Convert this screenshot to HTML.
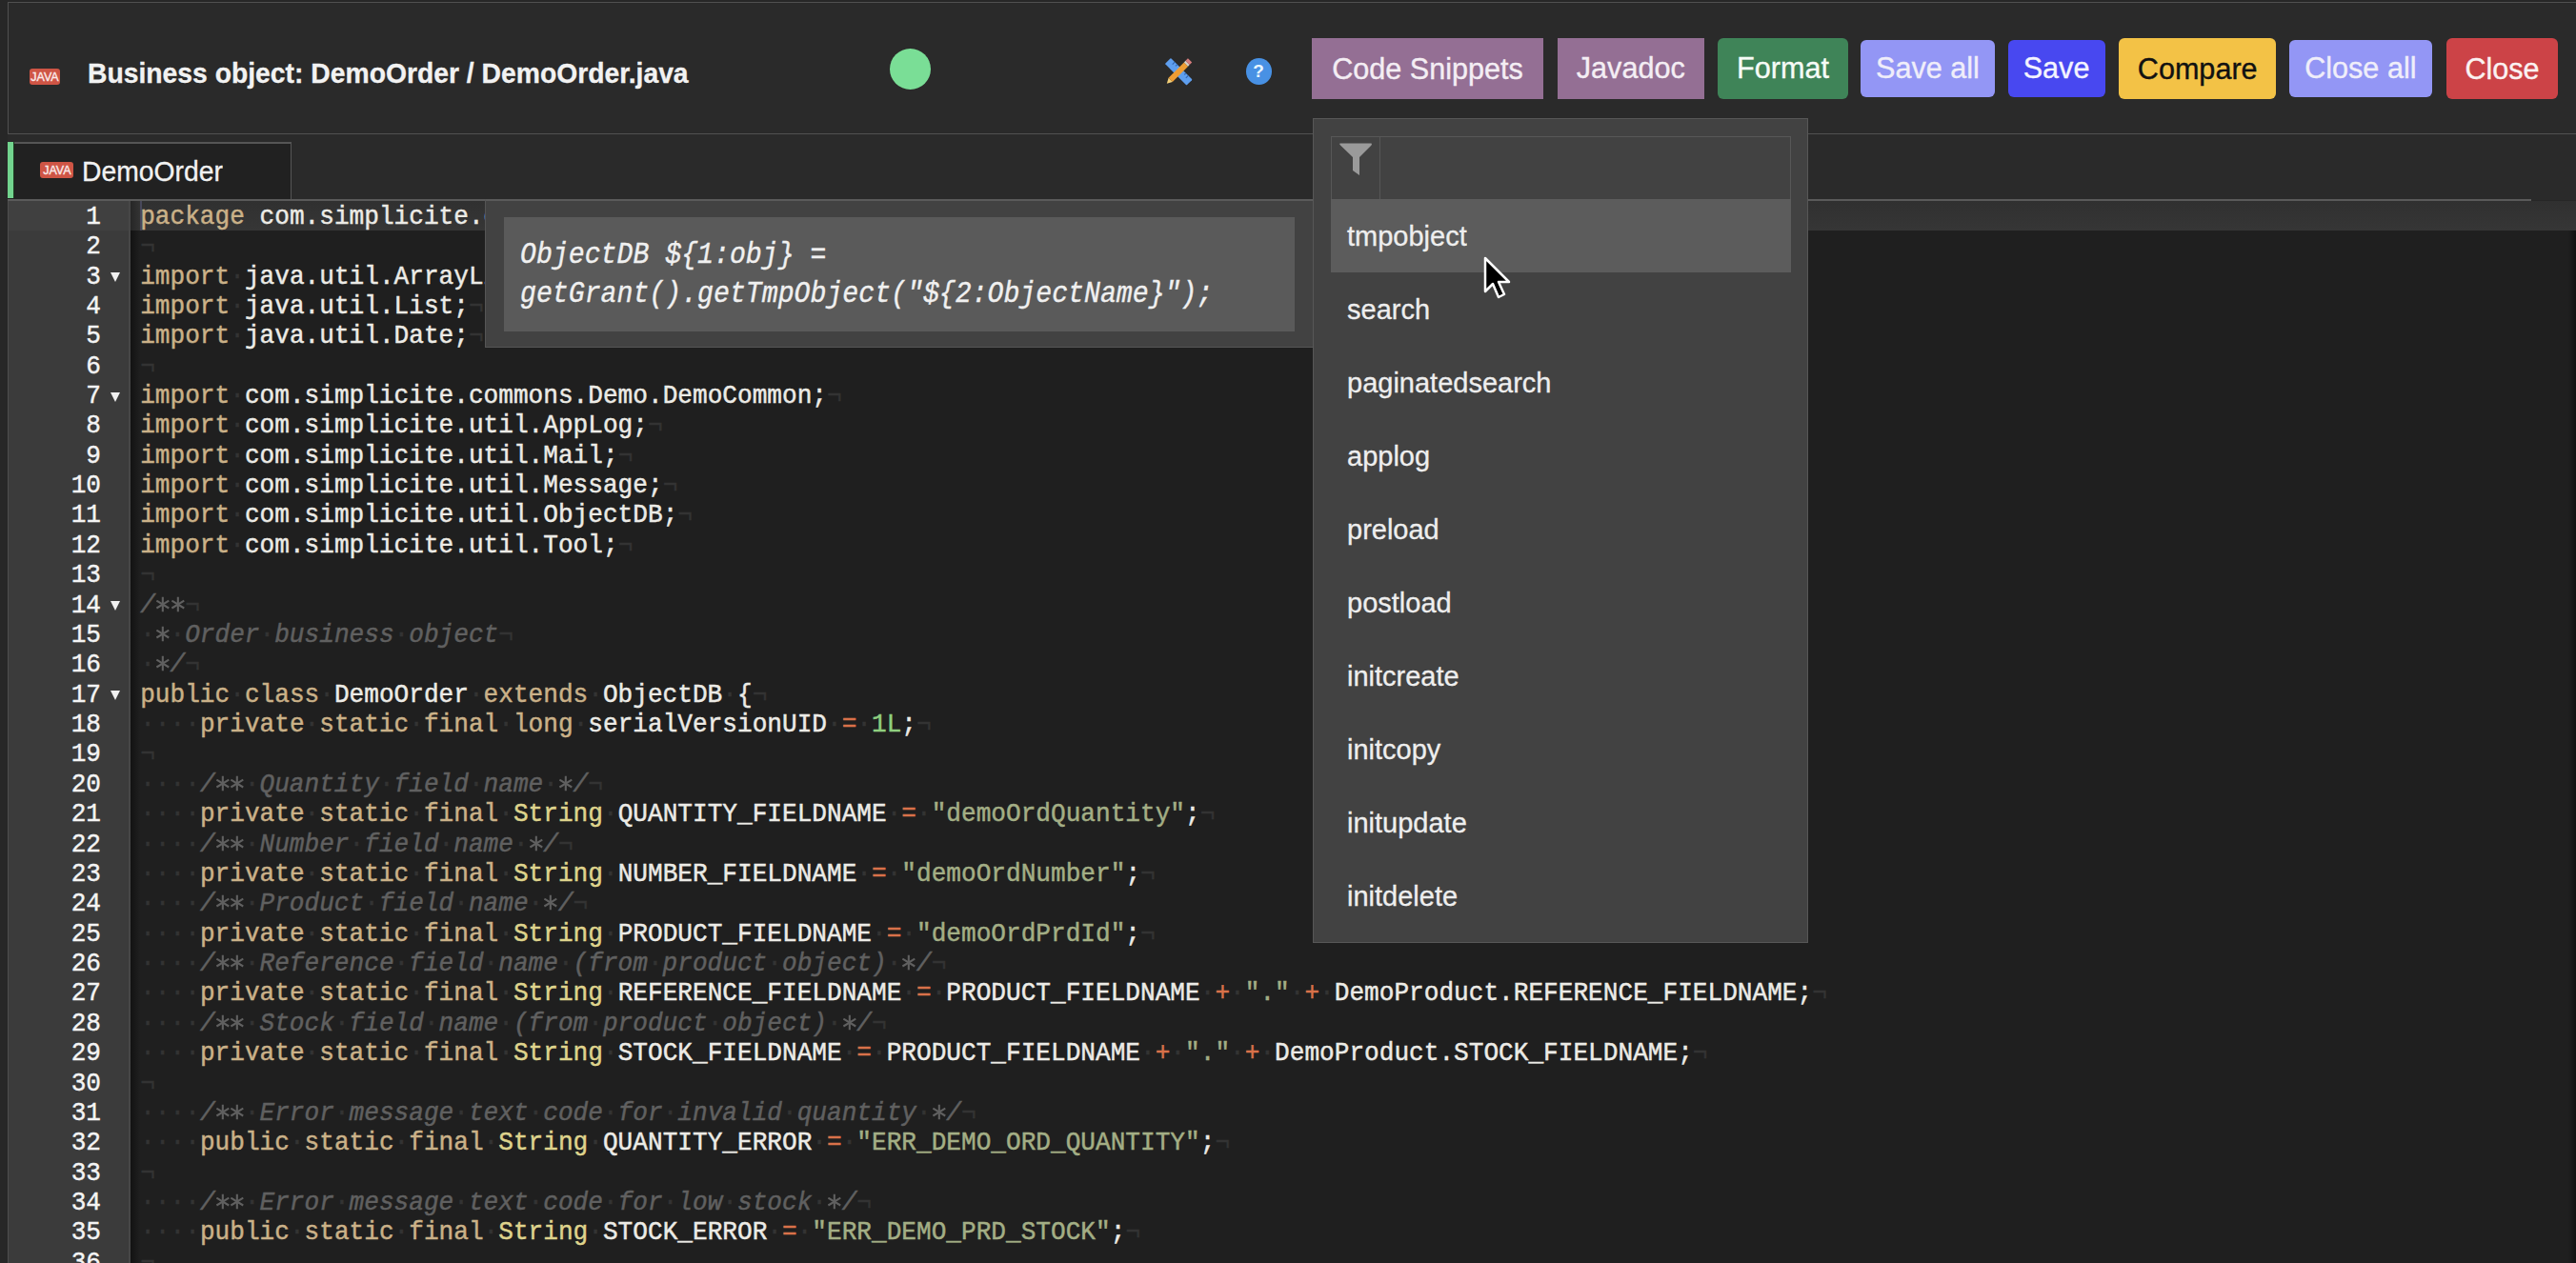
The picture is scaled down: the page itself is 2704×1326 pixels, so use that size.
<!DOCTYPE html><html><head><meta charset="utf-8"><style>
*{margin:0;padding:0;box-sizing:border-box}
html,body{width:2704px;height:1326px;overflow:hidden;background:#272727;font-family:"Liberation Sans",sans-serif}
.abs{position:absolute}
#hdr{position:absolute;left:7.5px;top:2.2px;width:2720px;height:139px;background:#2a2a2a;border:1.6px solid #505050}
.badge{position:absolute;background:#cf5545;color:#fbeaea;font:12.5px/18.5px "Liberation Sans",sans-serif;-webkit-text-stroke:0.35px;text-align:center;border-radius:3px;letter-spacing:0}
#title{position:absolute;left:92px;top:55px;font-weight:bold;font-size:28.3px;line-height:44px;color:#f2f2f2;white-space:nowrap;-webkit-text-stroke:0.3px;transform:scaleY(1.03);transform-origin:0 31.8px}
#dot{position:absolute;left:933.8px;top:50.7px;width:43.5px;height:43.5px;border-radius:50%;background:#7ade96}
#help{position:absolute;left:1307.5px;top:61.3px;width:27px;height:27.5px;border-radius:50%;background:#4891e4;color:#e8f6ff;font:bold 19px/28px "Liberation Sans",sans-serif;text-align:center}
.btn{position:absolute;text-align:center;font-size:30.6px;white-space:nowrap;-webkit-text-stroke:0.35px}.btn span{display:inline-block;transform:scaleY(1.04)}
#tabbar{position:absolute;left:8px;top:141px;width:2696px;height:69px;background:#2a2a2a}
#tab{position:absolute;left:8px;top:149px;width:298px;height:60px;background:#212121;border-top:2px solid #555;border-right:1.5px solid #555}
#tabg{position:absolute;left:7.6px;top:148.5px;width:7.6px;height:59px;background:#72d48e;border-right:1.5px solid #1d3a1f}
#tabt{position:absolute;left:86px;top:151.3px;font-size:28.3px;line-height:59px;color:#f2f2f2;-webkit-text-stroke:0.3px;transform:scaleY(1.04);transform-origin:0 39.3px}
#edtop{position:absolute;left:8px;top:209px;width:2649px;height:2px;background:#5a5a5a}
#editor{position:absolute;left:8px;top:211px;width:2696px;height:1116px;background:#1f1f1f}
#gutter{position:absolute;left:8px;top:211px;width:129px;height:1116px;background:#3b3b3b;border-left:1px solid #4e4e4e;border-right:2px solid #474747}
#shadow{position:absolute;left:137px;top:242px;width:10px;height:1116px;background:linear-gradient(to right,#121212,#1f1f1f)}
#actg{position:absolute;left:9px;top:211px;width:126px;height:31px;background:#404040}#shadow1{position:absolute;left:137px;top:211px;width:10px;height:31px;background:linear-gradient(to right,#262626,#333)}#rstrip{position:absolute;left:2696px;top:242px;width:8px;height:1084px;background:linear-gradient(to right,#1f1f1f,#111)}
#actc{position:absolute;left:137px;top:211px;width:2567px;height:31px;background:linear-gradient(#303030,#363636)}
.ln{position:absolute;left:147.2px;height:31.37px;line-height:31.37px;transform:scaleY(1.055);transform-origin:0 22.63px;font-family:"Liberation Mono",monospace;font-size:26.113px;white-space:pre;color:#ecebe6;-webkit-text-stroke:0.45px}
.gn{position:absolute;left:8px;width:98px;transform:scaleY(1.055);transform-origin:0 22.63px;text-align:right;height:31.37px;line-height:31.37px;font-family:"Liberation Mono",monospace;font-size:26.113px;color:#f4f4f4;-webkit-text-stroke:0.4px}
.fa{position:absolute;left:116px;width:0;height:0;border-left:5px solid transparent;border-right:5px solid transparent;border-top:10px solid #f0f0f0}
.ast{vertical-align:top}.k{color:#cab188}.t{color:#ded38c}.s{color:#a3ae85}.o{color:#d9714a}.n{color:#8fcf7f}.c{color:#606060;font-style:italic}.d{color:#ecebe6}.i{color:#333333}
#pop{position:absolute;left:509px;top:209px;width:870px;height:156px;background:#424242;border:1.5px solid #555;border-right:none;border-top:2px solid #5a5a5a}
#popin{position:absolute;left:528.7px;top:228px;width:830.5px;height:119.8px;background:#5a5a5a}
.pl{position:absolute;left:546px;font-family:"Liberation Mono",monospace;font-style:italic;font-size:28.2px;color:#f0f0f0;white-space:pre;line-height:41px;height:41px;transform:scaleY(1.12);transform-origin:0 28px;-webkit-text-stroke:0.35px}
#dd{position:absolute;left:1378px;top:124px;width:520px;height:866px;background:#424242;border:1px solid #575757}
#ig{position:absolute;left:18px;top:18px;width:483px;height:67px;border:1px solid #575757;border-bottom:none}
#addon{position:absolute;left:0;top:0;width:51px;height:66px;border-right:1px solid #575757}
.it{position:absolute;left:18px;width:483px;height:76.5px;padding-left:17px;font-size:29px;line-height:78px;color:#eeeeee;white-space:nowrap;-webkit-text-stroke:0.3px}.it span{display:inline-block;transform:scaleY(1.04)}
.it.act{background:#5c5c5c}
</style></head><body>
<div id="hdr"></div>
<div class="badge" style="left:30.7px;top:71.7px;width:32.5px;height:17px">JAVA</div>
<div id="title">Business object: DemoOrder / DemoOrder.java</div>
<div id="dot"></div>
<svg class="abs" style="left:1215px;top:55px" width="45" height="40" viewBox="0 0 45 40">
<g transform="translate(22.2,20.3) rotate(45)"><rect x="-16" y="-4.3" width="32" height="8.6" fill="#5e9eee" rx="0.8"/>
<g stroke="#2f64b0" stroke-width="1.1"><line x1="-10" y1="-4.3" x2="-10" y2="-0.8"/><line x1="-6.5" y1="-4.3" x2="-6.5" y2="-2"/><line x1="6.5" y1="-4.3" x2="6.5" y2="-2"/><line x1="10" y1="-4.3" x2="10" y2="-0.8"/></g></g>
<g transform="translate(22.2,20.3) rotate(-45)"><rect x="-12" y="-3" width="23" height="6" fill="#ee9c34"/><polygon points="-12,-3 -17.5,0 -12,3" fill="#f2cf78"/><rect x="11" y="-3" width="2.2" height="6" fill="#d8d0c8"/><rect x="13.2" y="-3" width="3.6" height="6" fill="#d77c7c"/></g>
</svg>
<div id="help">?</div>
<div class="btn" style="left:1377.0px;top:40.0px;width:243.0px;height:64.0px;background:#946f94;color:#f4eef4;border-radius:0px;line-height:64.0px"><span>Code Snippets</span></div><div class="btn" style="left:1634.6px;top:40.0px;width:154.4px;height:63.5px;background:#946f94;color:#f4eef4;border-radius:0px;line-height:63.5px"><span>Javadoc</span></div><div class="btn" style="left:1803.3px;top:40.0px;width:136.3px;height:63.5px;background:#3f8458;color:#f6fbf6;border-radius:6px;line-height:63.5px"><span>Format</span></div><div class="btn" style="left:1953.0px;top:42.0px;width:141.0px;height:59.5px;background:#9396f5;color:#f0eefa;border-radius:6px;line-height:59.5px"><span>Save all</span></div><div class="btn" style="left:2107.5px;top:42.0px;width:102.1px;height:59.5px;background:#4848f0;color:#f4f4ff;border-radius:6px;line-height:59.5px"><span>Save</span></div><div class="btn" style="left:2224.0px;top:39.6px;width:165.4px;height:64.4px;background:#f3c246;color:#111111;border-radius:6px;line-height:64.4px"><span>Compare</span></div><div class="btn" style="left:2402.5px;top:42.0px;width:150.7px;height:59.5px;background:#9396f5;color:#f0eefa;border-radius:6px;line-height:59.5px"><span>Close all</span></div><div class="btn" style="left:2568.0px;top:39.6px;width:117.0px;height:64.4px;background:#cc4347;color:#fbf2f2;border-radius:6px;line-height:64.4px"><span>Close</span></div>
<div id="tabbar"></div><div id="tab"></div><div id="tabg"></div>
<div class="badge" style="left:42.4px;top:169.7px;width:35px;height:17px;line-height:18px">JAVA</div>
<div id="tabt">DemoOrder</div>
<div id="edtop"></div>
<div id="editor"></div>
<div id="gutter"></div>
<div id="actc"></div><div id="actg"></div>
<div id="shadow"></div><div id="shadow1"></div><div style="position:absolute;left:146.8px;top:211px;width:2.6px;height:31px;background:#48485a"></div><div id="rstrip"></div>
<div class="gn" style="top:212.77px">1</div><div class="gn" style="top:244.14px">2</div><div class="gn" style="top:275.51px">3</div><div class="fa" style="top:286.21px"></div><div class="gn" style="top:306.88px">4</div><div class="gn" style="top:338.25px">5</div><div class="gn" style="top:369.62px">6</div><div class="gn" style="top:400.99px">7</div><div class="fa" style="top:411.69px"></div><div class="gn" style="top:432.36px">8</div><div class="gn" style="top:463.73px">9</div><div class="gn" style="top:495.10px">10</div><div class="gn" style="top:526.47px">11</div><div class="gn" style="top:557.84px">12</div><div class="gn" style="top:589.21px">13</div><div class="gn" style="top:620.58px">14</div><div class="fa" style="top:631.28px"></div><div class="gn" style="top:651.95px">15</div><div class="gn" style="top:683.32px">16</div><div class="gn" style="top:714.69px">17</div><div class="fa" style="top:725.39px"></div><div class="gn" style="top:746.06px">18</div><div class="gn" style="top:777.43px">19</div><div class="gn" style="top:808.80px">20</div><div class="gn" style="top:840.17px">21</div><div class="gn" style="top:871.54px">22</div><div class="gn" style="top:902.91px">23</div><div class="gn" style="top:934.28px">24</div><div class="gn" style="top:965.65px">25</div><div class="gn" style="top:997.02px">26</div><div class="gn" style="top:1028.39px">27</div><div class="gn" style="top:1059.76px">28</div><div class="gn" style="top:1091.13px">29</div><div class="gn" style="top:1122.50px">30</div><div class="gn" style="top:1153.87px">31</div><div class="gn" style="top:1185.24px">32</div><div class="gn" style="top:1216.61px">33</div><div class="gn" style="top:1247.98px">34</div><div class="gn" style="top:1279.35px">35</div><div class="gn" style="top:1310.72px">36</div>
<div class="ln" style="top:212.77px"><span class="k">package</span><span class="i">·</span><span class="d">com</span><span class="d">.</span><span class="d">simplicite</span><span class="d">.</span><span class="d">objects</span><span class="d">.</span><span class="d">Demo</span><span class="d">;</span><span class="i">¬</span></div><div class="ln" style="top:244.14px"><span class="i">¬</span></div><div class="ln" style="top:275.51px"><span class="k">import</span><span class="i">·</span><span class="d">java</span><span class="d">.</span><span class="d">util</span><span class="d">.</span><span class="d">ArrayList</span><span class="d">;</span><span class="i">¬</span></div><div class="ln" style="top:306.88px"><span class="k">import</span><span class="i">·</span><span class="d">java</span><span class="d">.</span><span class="d">util</span><span class="d">.</span><span class="d">List</span><span class="d">;</span><span class="i">¬</span></div><div class="ln" style="top:338.25px"><span class="k">import</span><span class="i">·</span><span class="d">java</span><span class="d">.</span><span class="d">util</span><span class="d">.</span><span class="d">Date</span><span class="d">;</span><span class="i">¬</span></div><div class="ln" style="top:369.62px"><span class="i">¬</span></div><div class="ln" style="top:400.99px"><span class="k">import</span><span class="i">·</span><span class="d">com</span><span class="d">.</span><span class="d">simplicite</span><span class="d">.</span><span class="d">commons</span><span class="d">.</span><span class="d">Demo</span><span class="d">.</span><span class="d">DemoCommon</span><span class="d">;</span><span class="i">¬</span></div><div class="ln" style="top:432.36px"><span class="k">import</span><span class="i">·</span><span class="d">com</span><span class="d">.</span><span class="d">simplicite</span><span class="d">.</span><span class="d">util</span><span class="d">.</span><span class="d">AppLog</span><span class="d">;</span><span class="i">¬</span></div><div class="ln" style="top:463.73px"><span class="k">import</span><span class="i">·</span><span class="d">com</span><span class="d">.</span><span class="d">simplicite</span><span class="d">.</span><span class="d">util</span><span class="d">.</span><span class="d">Mail</span><span class="d">;</span><span class="i">¬</span></div><div class="ln" style="top:495.10px"><span class="k">import</span><span class="i">·</span><span class="d">com</span><span class="d">.</span><span class="d">simplicite</span><span class="d">.</span><span class="d">util</span><span class="d">.</span><span class="d">Message</span><span class="d">;</span><span class="i">¬</span></div><div class="ln" style="top:526.47px"><span class="k">import</span><span class="i">·</span><span class="d">com</span><span class="d">.</span><span class="d">simplicite</span><span class="d">.</span><span class="d">util</span><span class="d">.</span><span class="d">ObjectDB</span><span class="d">;</span><span class="i">¬</span></div><div class="ln" style="top:557.84px"><span class="k">import</span><span class="i">·</span><span class="d">com</span><span class="d">.</span><span class="d">simplicite</span><span class="d">.</span><span class="d">util</span><span class="d">.</span><span class="d">Tool</span><span class="d">;</span><span class="i">¬</span></div><div class="ln" style="top:589.21px"><span class="i">¬</span></div><div class="ln" style="top:620.58px"><span class="c">/<svg class="ast" width="15.67" height="31.37" viewBox="0 0 15.67 31.37"><g stroke="#606060" stroke-width="2.1" stroke-linecap="butt"><line x1="7.83" y1="6.6" x2="7.83" y2="21.4"/><line x1="1.4" y1="10.3" x2="14.26" y2="17.7"/><line x1="1.4" y1="17.7" x2="14.26" y2="10.3"/></g></svg><svg class="ast" width="15.67" height="31.37" viewBox="0 0 15.67 31.37"><g stroke="#606060" stroke-width="2.1" stroke-linecap="butt"><line x1="7.83" y1="6.6" x2="7.83" y2="21.4"/><line x1="1.4" y1="10.3" x2="14.26" y2="17.7"/><line x1="1.4" y1="17.7" x2="14.26" y2="10.3"/></g></svg></span><span class="i">¬</span></div><div class="ln" style="top:651.95px"><span class="i">·</span><span class="c"><svg class="ast" width="15.67" height="31.37" viewBox="0 0 15.67 31.37"><g stroke="#606060" stroke-width="2.1" stroke-linecap="butt"><line x1="7.83" y1="6.6" x2="7.83" y2="21.4"/><line x1="1.4" y1="10.3" x2="14.26" y2="17.7"/><line x1="1.4" y1="17.7" x2="14.26" y2="10.3"/></g></svg></span><span class="i">·</span><span class="c">Order</span><span class="i">·</span><span class="c">business</span><span class="i">·</span><span class="c">object</span><span class="i">¬</span></div><div class="ln" style="top:683.32px"><span class="i">·</span><span class="c"><svg class="ast" width="15.67" height="31.37" viewBox="0 0 15.67 31.37"><g stroke="#606060" stroke-width="2.1" stroke-linecap="butt"><line x1="7.83" y1="6.6" x2="7.83" y2="21.4"/><line x1="1.4" y1="10.3" x2="14.26" y2="17.7"/><line x1="1.4" y1="17.7" x2="14.26" y2="10.3"/></g></svg>/</span><span class="i">¬</span></div><div class="ln" style="top:714.69px"><span class="k">public</span><span class="i">·</span><span class="k">class</span><span class="i">·</span><span class="d">DemoOrder</span><span class="i">·</span><span class="k">extends</span><span class="i">·</span><span class="d">ObjectDB</span><span class="i">·</span><span class="d">{</span><span class="i">¬</span></div><div class="ln" style="top:746.06px"><span class="i">····</span><span class="k">private</span><span class="i">·</span><span class="k">static</span><span class="i">·</span><span class="k">final</span><span class="i">·</span><span class="k">long</span><span class="i">·</span><span class="d">serialVersionUID</span><span class="i">·</span><span class="o">=</span><span class="i">·</span><span class="n">1L</span><span class="d">;</span><span class="i">¬</span></div><div class="ln" style="top:777.43px"><span class="i">¬</span></div><div class="ln" style="top:808.80px"><span class="i">····</span><span class="c">/<svg class="ast" width="15.67" height="31.37" viewBox="0 0 15.67 31.37"><g stroke="#606060" stroke-width="2.1" stroke-linecap="butt"><line x1="7.83" y1="6.6" x2="7.83" y2="21.4"/><line x1="1.4" y1="10.3" x2="14.26" y2="17.7"/><line x1="1.4" y1="17.7" x2="14.26" y2="10.3"/></g></svg><svg class="ast" width="15.67" height="31.37" viewBox="0 0 15.67 31.37"><g stroke="#606060" stroke-width="2.1" stroke-linecap="butt"><line x1="7.83" y1="6.6" x2="7.83" y2="21.4"/><line x1="1.4" y1="10.3" x2="14.26" y2="17.7"/><line x1="1.4" y1="17.7" x2="14.26" y2="10.3"/></g></svg></span><span class="i">·</span><span class="c">Quantity</span><span class="i">·</span><span class="c">field</span><span class="i">·</span><span class="c">name</span><span class="i">·</span><span class="c"><svg class="ast" width="15.67" height="31.37" viewBox="0 0 15.67 31.37"><g stroke="#606060" stroke-width="2.1" stroke-linecap="butt"><line x1="7.83" y1="6.6" x2="7.83" y2="21.4"/><line x1="1.4" y1="10.3" x2="14.26" y2="17.7"/><line x1="1.4" y1="17.7" x2="14.26" y2="10.3"/></g></svg>/</span><span class="i">¬</span></div><div class="ln" style="top:840.17px"><span class="i">····</span><span class="k">private</span><span class="i">·</span><span class="k">static</span><span class="i">·</span><span class="k">final</span><span class="i">·</span><span class="t">String</span><span class="i">·</span><span class="d">QUANTITY_FIELDNAME</span><span class="i">·</span><span class="o">=</span><span class="i">·</span><span class="s">"demoOrdQuantity"</span><span class="d">;</span><span class="i">¬</span></div><div class="ln" style="top:871.54px"><span class="i">····</span><span class="c">/<svg class="ast" width="15.67" height="31.37" viewBox="0 0 15.67 31.37"><g stroke="#606060" stroke-width="2.1" stroke-linecap="butt"><line x1="7.83" y1="6.6" x2="7.83" y2="21.4"/><line x1="1.4" y1="10.3" x2="14.26" y2="17.7"/><line x1="1.4" y1="17.7" x2="14.26" y2="10.3"/></g></svg><svg class="ast" width="15.67" height="31.37" viewBox="0 0 15.67 31.37"><g stroke="#606060" stroke-width="2.1" stroke-linecap="butt"><line x1="7.83" y1="6.6" x2="7.83" y2="21.4"/><line x1="1.4" y1="10.3" x2="14.26" y2="17.7"/><line x1="1.4" y1="17.7" x2="14.26" y2="10.3"/></g></svg></span><span class="i">·</span><span class="c">Number</span><span class="i">·</span><span class="c">field</span><span class="i">·</span><span class="c">name</span><span class="i">·</span><span class="c"><svg class="ast" width="15.67" height="31.37" viewBox="0 0 15.67 31.37"><g stroke="#606060" stroke-width="2.1" stroke-linecap="butt"><line x1="7.83" y1="6.6" x2="7.83" y2="21.4"/><line x1="1.4" y1="10.3" x2="14.26" y2="17.7"/><line x1="1.4" y1="17.7" x2="14.26" y2="10.3"/></g></svg>/</span><span class="i">¬</span></div><div class="ln" style="top:902.91px"><span class="i">····</span><span class="k">private</span><span class="i">·</span><span class="k">static</span><span class="i">·</span><span class="k">final</span><span class="i">·</span><span class="t">String</span><span class="i">·</span><span class="d">NUMBER_FIELDNAME</span><span class="i">·</span><span class="o">=</span><span class="i">·</span><span class="s">"demoOrdNumber"</span><span class="d">;</span><span class="i">¬</span></div><div class="ln" style="top:934.28px"><span class="i">····</span><span class="c">/<svg class="ast" width="15.67" height="31.37" viewBox="0 0 15.67 31.37"><g stroke="#606060" stroke-width="2.1" stroke-linecap="butt"><line x1="7.83" y1="6.6" x2="7.83" y2="21.4"/><line x1="1.4" y1="10.3" x2="14.26" y2="17.7"/><line x1="1.4" y1="17.7" x2="14.26" y2="10.3"/></g></svg><svg class="ast" width="15.67" height="31.37" viewBox="0 0 15.67 31.37"><g stroke="#606060" stroke-width="2.1" stroke-linecap="butt"><line x1="7.83" y1="6.6" x2="7.83" y2="21.4"/><line x1="1.4" y1="10.3" x2="14.26" y2="17.7"/><line x1="1.4" y1="17.7" x2="14.26" y2="10.3"/></g></svg></span><span class="i">·</span><span class="c">Product</span><span class="i">·</span><span class="c">field</span><span class="i">·</span><span class="c">name</span><span class="i">·</span><span class="c"><svg class="ast" width="15.67" height="31.37" viewBox="0 0 15.67 31.37"><g stroke="#606060" stroke-width="2.1" stroke-linecap="butt"><line x1="7.83" y1="6.6" x2="7.83" y2="21.4"/><line x1="1.4" y1="10.3" x2="14.26" y2="17.7"/><line x1="1.4" y1="17.7" x2="14.26" y2="10.3"/></g></svg>/</span><span class="i">¬</span></div><div class="ln" style="top:965.65px"><span class="i">····</span><span class="k">private</span><span class="i">·</span><span class="k">static</span><span class="i">·</span><span class="k">final</span><span class="i">·</span><span class="t">String</span><span class="i">·</span><span class="d">PRODUCT_FIELDNAME</span><span class="i">·</span><span class="o">=</span><span class="i">·</span><span class="s">"demoOrdPrdId"</span><span class="d">;</span><span class="i">¬</span></div><div class="ln" style="top:997.02px"><span class="i">····</span><span class="c">/<svg class="ast" width="15.67" height="31.37" viewBox="0 0 15.67 31.37"><g stroke="#606060" stroke-width="2.1" stroke-linecap="butt"><line x1="7.83" y1="6.6" x2="7.83" y2="21.4"/><line x1="1.4" y1="10.3" x2="14.26" y2="17.7"/><line x1="1.4" y1="17.7" x2="14.26" y2="10.3"/></g></svg><svg class="ast" width="15.67" height="31.37" viewBox="0 0 15.67 31.37"><g stroke="#606060" stroke-width="2.1" stroke-linecap="butt"><line x1="7.83" y1="6.6" x2="7.83" y2="21.4"/><line x1="1.4" y1="10.3" x2="14.26" y2="17.7"/><line x1="1.4" y1="17.7" x2="14.26" y2="10.3"/></g></svg></span><span class="i">·</span><span class="c">Reference</span><span class="i">·</span><span class="c">field</span><span class="i">·</span><span class="c">name</span><span class="i">·</span><span class="c">(from</span><span class="i">·</span><span class="c">product</span><span class="i">·</span><span class="c">object)</span><span class="i">·</span><span class="c"><svg class="ast" width="15.67" height="31.37" viewBox="0 0 15.67 31.37"><g stroke="#606060" stroke-width="2.1" stroke-linecap="butt"><line x1="7.83" y1="6.6" x2="7.83" y2="21.4"/><line x1="1.4" y1="10.3" x2="14.26" y2="17.7"/><line x1="1.4" y1="17.7" x2="14.26" y2="10.3"/></g></svg>/</span><span class="i">¬</span></div><div class="ln" style="top:1028.39px"><span class="i">····</span><span class="k">private</span><span class="i">·</span><span class="k">static</span><span class="i">·</span><span class="k">final</span><span class="i">·</span><span class="t">String</span><span class="i">·</span><span class="d">REFERENCE_FIELDNAME</span><span class="i">·</span><span class="o">=</span><span class="i">·</span><span class="d">PRODUCT_FIELDNAME</span><span class="i">·</span><span class="o">+</span><span class="i">·</span><span class="s">"."</span><span class="i">·</span><span class="o">+</span><span class="i">·</span><span class="d">DemoProduct</span><span class="d">.</span><span class="d">REFERENCE_FIELDNAME</span><span class="d">;</span><span class="i">¬</span></div><div class="ln" style="top:1059.76px"><span class="i">····</span><span class="c">/<svg class="ast" width="15.67" height="31.37" viewBox="0 0 15.67 31.37"><g stroke="#606060" stroke-width="2.1" stroke-linecap="butt"><line x1="7.83" y1="6.6" x2="7.83" y2="21.4"/><line x1="1.4" y1="10.3" x2="14.26" y2="17.7"/><line x1="1.4" y1="17.7" x2="14.26" y2="10.3"/></g></svg><svg class="ast" width="15.67" height="31.37" viewBox="0 0 15.67 31.37"><g stroke="#606060" stroke-width="2.1" stroke-linecap="butt"><line x1="7.83" y1="6.6" x2="7.83" y2="21.4"/><line x1="1.4" y1="10.3" x2="14.26" y2="17.7"/><line x1="1.4" y1="17.7" x2="14.26" y2="10.3"/></g></svg></span><span class="i">·</span><span class="c">Stock</span><span class="i">·</span><span class="c">field</span><span class="i">·</span><span class="c">name</span><span class="i">·</span><span class="c">(from</span><span class="i">·</span><span class="c">product</span><span class="i">·</span><span class="c">object)</span><span class="i">·</span><span class="c"><svg class="ast" width="15.67" height="31.37" viewBox="0 0 15.67 31.37"><g stroke="#606060" stroke-width="2.1" stroke-linecap="butt"><line x1="7.83" y1="6.6" x2="7.83" y2="21.4"/><line x1="1.4" y1="10.3" x2="14.26" y2="17.7"/><line x1="1.4" y1="17.7" x2="14.26" y2="10.3"/></g></svg>/</span><span class="i">¬</span></div><div class="ln" style="top:1091.13px"><span class="i">····</span><span class="k">private</span><span class="i">·</span><span class="k">static</span><span class="i">·</span><span class="k">final</span><span class="i">·</span><span class="t">String</span><span class="i">·</span><span class="d">STOCK_FIELDNAME</span><span class="i">·</span><span class="o">=</span><span class="i">·</span><span class="d">PRODUCT_FIELDNAME</span><span class="i">·</span><span class="o">+</span><span class="i">·</span><span class="s">"."</span><span class="i">·</span><span class="o">+</span><span class="i">·</span><span class="d">DemoProduct</span><span class="d">.</span><span class="d">STOCK_FIELDNAME</span><span class="d">;</span><span class="i">¬</span></div><div class="ln" style="top:1122.50px"><span class="i">¬</span></div><div class="ln" style="top:1153.87px"><span class="i">····</span><span class="c">/<svg class="ast" width="15.67" height="31.37" viewBox="0 0 15.67 31.37"><g stroke="#606060" stroke-width="2.1" stroke-linecap="butt"><line x1="7.83" y1="6.6" x2="7.83" y2="21.4"/><line x1="1.4" y1="10.3" x2="14.26" y2="17.7"/><line x1="1.4" y1="17.7" x2="14.26" y2="10.3"/></g></svg><svg class="ast" width="15.67" height="31.37" viewBox="0 0 15.67 31.37"><g stroke="#606060" stroke-width="2.1" stroke-linecap="butt"><line x1="7.83" y1="6.6" x2="7.83" y2="21.4"/><line x1="1.4" y1="10.3" x2="14.26" y2="17.7"/><line x1="1.4" y1="17.7" x2="14.26" y2="10.3"/></g></svg></span><span class="i">·</span><span class="c">Error</span><span class="i">·</span><span class="c">message</span><span class="i">·</span><span class="c">text</span><span class="i">·</span><span class="c">code</span><span class="i">·</span><span class="c">for</span><span class="i">·</span><span class="c">invalid</span><span class="i">·</span><span class="c">quantity</span><span class="i">·</span><span class="c"><svg class="ast" width="15.67" height="31.37" viewBox="0 0 15.67 31.37"><g stroke="#606060" stroke-width="2.1" stroke-linecap="butt"><line x1="7.83" y1="6.6" x2="7.83" y2="21.4"/><line x1="1.4" y1="10.3" x2="14.26" y2="17.7"/><line x1="1.4" y1="17.7" x2="14.26" y2="10.3"/></g></svg>/</span><span class="i">¬</span></div><div class="ln" style="top:1185.24px"><span class="i">····</span><span class="k">public</span><span class="i">·</span><span class="k">static</span><span class="i">·</span><span class="k">final</span><span class="i">·</span><span class="t">String</span><span class="i">·</span><span class="d">QUANTITY_ERROR</span><span class="i">·</span><span class="o">=</span><span class="i">·</span><span class="s">"ERR_DEMO_ORD_QUANTITY"</span><span class="d">;</span><span class="i">¬</span></div><div class="ln" style="top:1216.61px"><span class="i">¬</span></div><div class="ln" style="top:1247.98px"><span class="i">····</span><span class="c">/<svg class="ast" width="15.67" height="31.37" viewBox="0 0 15.67 31.37"><g stroke="#606060" stroke-width="2.1" stroke-linecap="butt"><line x1="7.83" y1="6.6" x2="7.83" y2="21.4"/><line x1="1.4" y1="10.3" x2="14.26" y2="17.7"/><line x1="1.4" y1="17.7" x2="14.26" y2="10.3"/></g></svg><svg class="ast" width="15.67" height="31.37" viewBox="0 0 15.67 31.37"><g stroke="#606060" stroke-width="2.1" stroke-linecap="butt"><line x1="7.83" y1="6.6" x2="7.83" y2="21.4"/><line x1="1.4" y1="10.3" x2="14.26" y2="17.7"/><line x1="1.4" y1="17.7" x2="14.26" y2="10.3"/></g></svg></span><span class="i">·</span><span class="c">Error</span><span class="i">·</span><span class="c">message</span><span class="i">·</span><span class="c">text</span><span class="i">·</span><span class="c">code</span><span class="i">·</span><span class="c">for</span><span class="i">·</span><span class="c">low</span><span class="i">·</span><span class="c">stock</span><span class="i">·</span><span class="c"><svg class="ast" width="15.67" height="31.37" viewBox="0 0 15.67 31.37"><g stroke="#606060" stroke-width="2.1" stroke-linecap="butt"><line x1="7.83" y1="6.6" x2="7.83" y2="21.4"/><line x1="1.4" y1="10.3" x2="14.26" y2="17.7"/><line x1="1.4" y1="17.7" x2="14.26" y2="10.3"/></g></svg>/</span><span class="i">¬</span></div><div class="ln" style="top:1279.35px"><span class="i">····</span><span class="k">public</span><span class="i">·</span><span class="k">static</span><span class="i">·</span><span class="k">final</span><span class="i">·</span><span class="t">String</span><span class="i">·</span><span class="d">STOCK_ERROR</span><span class="i">·</span><span class="o">=</span><span class="i">·</span><span class="s">"ERR_DEMO_PRD_STOCK"</span><span class="d">;</span><span class="i">¬</span></div><div class="ln" style="top:1310.72px"><span class="i">¬</span></div>
<div id="pop"></div><div id="popin"></div>
<div class="pl" style="top:247.6px">ObjectDB ${1:obj} =</div>
<div class="pl" style="top:288.6px">getGrant().getTmpObject("${2:ObjectName}");</div>
<div id="dd"><div id="ig"><div id="addon"><svg class="abs" style="left:7px;top:5px" width="36" height="37" viewBox="0 0 36 37"><path d="M1.5 1.5 L34.5 1.5 Q35.5 2 34.5 3.5 L22 16 L22 35 L15 30 L15 16 L2 3.5 Q0.5 2 1.5 1.5 Z" fill="#9a9a9a"/></svg></div></div><div class="it act" style="top:84.00px"><span>tmpobject</span></div><div class="it" style="top:161.00px"><span>search</span></div><div class="it" style="top:238.00px"><span>paginatedsearch</span></div><div class="it" style="top:315.00px"><span>applog</span></div><div class="it" style="top:392.00px"><span>preload</span></div><div class="it" style="top:469.00px"><span>postload</span></div><div class="it" style="top:546.00px"><span>initcreate</span></div><div class="it" style="top:623.00px"><span>initcopy</span></div><div class="it" style="top:700.00px"><span>initupdate</span></div><div class="it" style="top:777.00px"><span>initdelete</span></div></div>
<svg class="abs" style="left:1555px;top:268px" width="36" height="50" viewBox="0 0 36 50"><path d="M4 3 L4 38 L12 30 L18 44 L24 41 L18 28 L29 28 Z" fill="#000" stroke="#fff" stroke-width="2.5" stroke-linejoin="round"/></svg>
</body></html>
